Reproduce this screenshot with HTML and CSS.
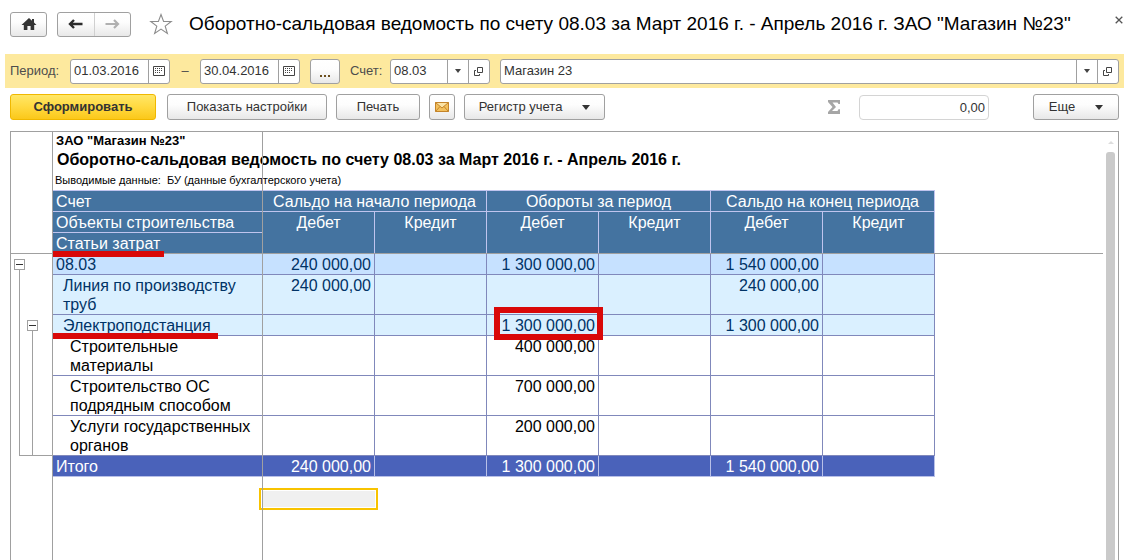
FILE: index.html
```html
<!DOCTYPE html>
<html lang="ru">
<head>
<meta charset="utf-8">
<title>Оборотно-сальдовая ведомость по счету 08.03</title>
<link rel="stylesheet" href="styles.css">
</head>
<body>
<header class="titlebar">
  <button class="btn home" type="button" aria-label="Домой">
    <svg width="16" height="14" viewBox="0 0 16 14"><path fill="#333" d="M8 1 L11 3.700 V2 H13 V5.500 L15.500 8 H13.200 V13 H9.600 V9 H6.400 V13 H2.800 V8 H0.500 Z"/></svg>
  </button>
  <div class="history">
    <button type="button" aria-label="Назад"><svg width="15" height="10" viewBox="0 0 15 10"><path fill="none" stroke="#2b2b2b" stroke-width="2.400" d="M14.500 5H2.500M6 1L2 5l4 4"/></svg></button>
    <button type="button" aria-label="Вперед"><svg width="15" height="10" viewBox="0 0 15 10"><path fill="none" stroke="#b0b0b0" stroke-width="2.200" d="M0.500 5h12M9 1l4 4-4 4"/></svg></button>
  </div>
  <button class="plain star" type="button" aria-label="В избранное">
    <svg width="24" height="22" viewBox="0 0 24 22"><path fill="#fff" stroke="#8c8c8c" stroke-width="1.100" d="M12 1.500l2.600 7h7.600l-6 4.600 2.200 7.400-6.400-4.400-6.400 4.400 2.200-7.400-6-4.600h7.600z"/></svg>
  </button>
  <h1>Оборотно-сальдовая ведомость по счету 08.03 за Март 2016 г. - Апрель 2016 г. ЗАО "Магазин №23"</h1>
  <button class="plain close" type="button" aria-label="Закрыть">
    <svg width="8" height="8" viewBox="0 0 8 8"><path stroke="#555" stroke-width="1.300" d="M0.700 0.700l6.600 6.600M7.300 0.700L0.700 7.300"/></svg>
  </button>
</header>

<form class="filter">
  <label class="period" for="from">Период:</label>
  <div class="field date"><input id="from" type="text" value="01.03.2016">
    <button type="button" aria-label="Выбрать дату начала"><svg width="12" height="10" viewBox="0 0 12 10"><path fill="none" stroke="#444" d="M.5 .5h11v9H.5z"/><path stroke="#444" stroke-dasharray="1 1" d="M2 2.500h8M2 4.500h8M2 6.500h6"/></svg></button></div>
  <span class="dash">–</span>
  <div class="field date"><input type="text" value="30.04.2016" aria-label="Конец периода">
    <button type="button" aria-label="Выбрать дату конца"><svg width="12" height="10" viewBox="0 0 12 10"><path fill="none" stroke="#444" d="M.5 .5h11v9H.5z"/><path stroke="#444" stroke-dasharray="1 1" d="M2 2.500h8M2 4.500h8M2 6.500h6"/></svg></button></div>
  <button class="btn dots" type="button" aria-label="Выбрать период"><svg width="12" height="2" viewBox="0 0 12 2"><path fill="#6b4e1d" d="M1 0h2v2H1zM5 0h2v2H5zM9 0h2v2H9z"/></svg></button>
  <label class="account-label" for="account">Счет:</label>
  <div class="field account"><input id="account" type="text" value="08.03">
    <button type="button" aria-label="Список счетов"><svg width="6" height="4" viewBox="0 0 6 4"><path fill="#444" d="M0 0h6L3 4z"/></svg></button>
    <button type="button" aria-label="Открыть счет"><svg width="10" height="9" viewBox="0 0 10 9"><path fill="none" stroke="#444" d="M3.500 .5h5v5h-5zM2 3.500H.5v5h5V7"/></svg></button></div>
  <div class="field shop"><input type="text" value="Магазин 23" aria-label="Организация">
    <button type="button" aria-label="Список организаций"><svg width="6" height="4" viewBox="0 0 6 4"><path fill="#444" d="M0 0h6L3 4z"/></svg></button>
    <button type="button" aria-label="Открыть организацию"><svg width="10" height="9" viewBox="0 0 10 9"><path fill="none" stroke="#444" d="M3.500 .5h5v5h-5zM2 3.500H.5v5h5V7"/></svg></button></div>
</form>

<div class="toolbar">
  <button class="btn primary" type="button">Сформировать</button>
  <button class="btn settings" type="button">Показать настройки</button>
  <button class="btn print" type="button">Печать</button>
  <button class="btn mail" type="button" aria-label="Отправить по почте">
    <svg width="14" height="10" viewBox="0 0 14 10"><path fill="#f3c05c" stroke="#c4842a" d="M.5 .5h13v9H.5z"/><path fill="#fbe3a5" stroke="#c4842a" d="M.5 .5L7 6l6.500-5.500z"/><path fill="none" stroke="#c4842a" d="M.5 9.500L5 4.500M13.500 9.500L9 4.500"/></svg>
  </button>
  <button class="btn register" type="button">Регистр учета <svg width="8" height="5" viewBox="0 0 8 5"><path fill="#333" d="M0 0h8L4 5z"/></svg></button>
  <label class="sigma" for="sum" aria-label="Сумма"><svg width="12" height="14" viewBox="0 0 12 14"><path fill="#a6a6a6" d="M0 0h12v4h-1.500L9.500 2.500H4.500L8 7l-4 4h5.500l1-1.800H12V14H0v-2L4.500 7 0 2z"/></svg></label>
  <input class="sum" id="sum" type="text" value="0,00">
  <button class="btn more" type="button">Еще <svg width="8" height="5" viewBox="0 0 8 5"><path fill="#333" d="M0 0h8L4 5z"/></svg></button>
</div>

<main class="sheet">
  <div class="gutter">
    <button class="toggle" type="button" aria-label="Свернуть 08.03"></button>
    <div class="branch">
      <button class="toggle" type="button" aria-label="Свернуть Электроподстанция"></button>
      <div class="branch-inner"></div>
    </div>
  </div>
  <div class="doc">
    <p class="org">ЗАО "Магазин №23"</p>
    <h2>Оборотно-сальдовая ведомость по счету 08.03 за Март 2016 г. - Апрель 2016 г.</h2>
    <p class="note">Выводимые данные:&nbsp; БУ (данные бухгалтерского учета)</p>
    <table>
      <colgroup><col class="name"><col span="6"></colgroup>
      <thead>
        <tr><th>Счет</th><th colspan="2">Сальдо на начало периода</th><th colspan="2">Обороты за период</th><th colspan="2">Сальдо на конец периода</th></tr>
        <tr><th>Объекты строительства</th><th rowspan="2">Дебет</th><th rowspan="2">Кредит</th><th rowspan="2">Дебет</th><th rowspan="2">Кредит</th><th rowspan="2">Дебет</th><th rowspan="2">Кредит</th></tr>
        <tr><th>Статьи затрат<span class="underline costs"></span></th></tr>
      </thead>
      <tbody>
        <tr class="level0"><td>08.03</td><td>240 000,00</td><td></td><td>1 300 000,00</td><td></td><td>1 540 000,00</td><td></td></tr>
        <tr class="level1"><td>Линия по производству труб</td><td>240 000,00</td><td></td><td></td><td></td><td>240 000,00</td><td></td></tr>
        <tr class="level1"><td>Электроподстанция<span class="underline object"></span></td><td></td><td></td><td>1 300 000,00<span class="frame"></span></td><td></td><td>1 300 000,00</td><td></td></tr>
        <tr class="level2"><td>Строительные<br>материалы</td><td></td><td></td><td>400 000,00</td><td></td><td></td><td></td></tr>
        <tr class="level2"><td>Строительство ОС подрядным способом</td><td></td><td></td><td>700 000,00</td><td></td><td></td><td></td></tr>
        <tr class="level2"><td>Услуги государственных органов</td><td></td><td></td><td>200 000,00</td><td></td><td></td><td></td></tr>
      </tbody>
      <tfoot>
        <tr><td>Итого</td><td>240 000,00</td><td></td><td>1 300 000,00</td><td></td><td>1 540 000,00</td><td></td></tr>
      </tfoot>
    </table>
    <div class="cursor"></div>
    <div class="freeze-col"></div>
  </div>
  <div class="scroll">
    <svg width="6" height="3" viewBox="0 0 6 3"><path fill="#ddd" d="M0 3h6L3 0z"/></svg>
    <div class="thumb"></div>
  </div>
  <div class="freeze-row"></div>
</main>
</body>
</html>
```

FILE: styles.css
```css
* { box-sizing: border-box; }

body {
  margin: 0;
  min-height: 100vh;
  display: flex;
  flex-direction: column;
  background: #fff;
  color: #333;
  font: 13px/16px "Liberation Sans", Arial, sans-serif;
}

button, input { font: inherit; color: inherit; margin: 0; padding: 0; }
button { display: flex; align-items: center; justify-content: center; flex: none; }
svg { display: block; flex: none; }
h1, h2, p { margin: 0; }

.btn {
  height: 26px;
  border: 1px solid #a0a0a0;
  border-radius: 3px;
  background: linear-gradient(#fff, #fdfdfd 40%, #e8e8e8);
}
.plain { border: 0; background: none; }

.titlebar {
  display: flex;
  align-items: center;
  height: 54px;
  padding: 0 10px 6px;
}
.home { width: 37px; height: 25px; }
.history {
  display: flex;
  width: 74px;
  height: 25px;
  margin-left: 10px;
  border: 1px solid #a0a0a0;
  border-radius: 3px;
  background: linear-gradient(#fff, #fdfdfd 40%, #e8e8e8);
}
.history button { flex: 1; border: 0; background: none; }
.history button + button { border-left: 1px solid #d0d0d0; }
.star { margin-left: 18px; }
h1 {
  flex: 1;
  margin-left: 16px;
  color: #000;
  font-size: 19px;
  font-weight: 400;
  line-height: 24px;
  white-space: nowrap;
}
.close { padding-bottom: 8px; }

.filter {
  display: flex;
  align-items: center;
  height: 34px;
  margin: 0 9px 0 5px;
  padding: 0 5px;
  background: #fde99e;
  color: #4d4d4d;
}
.period { width: 60px; }
.field {
  display: flex;
  height: 25px;
  border: 1px solid #a0a0a0;
  border-radius: 3px;
  background: #fff;
  color: #333;
}
.field input {
  flex: 1;
  min-width: 0;
  padding-left: 3px;
  border: 0;
  background: none;
}
.field button {
  width: 21px;
  border: 0;
  border-left: 1px solid #a0a0a0;
  background: none;
}
.date { width: 100px; }
.dash { width: 30px; text-align: center; }
.dots { width: 30px; height: 25px; margin-left: 10px; padding-top: 10px; }
.account-label { width: 40px; margin-left: 10px; }
.account { width: 100px; }
.shop { flex: 1; margin-left: 10px; }

.toolbar {
  display: flex;
  align-items: center;
  padding: 6px 14px 11px 10px;
}
.primary {
  width: 146px;
  border-color: #f0b800;
  background: linear-gradient(#ffe767, #ffd940 50%, #fbc81a);
  font-weight: 700;
}
.settings { width: 160px; margin-left: 11px; }
.print { width: 84px; margin-left: 9px; }
.mail { width: 26px; margin-left: 9px; }
.register { width: 141px; margin-left: 9px; gap: 20px; }
.sigma { margin-left: auto; }
.sum {
  width: 130px;
  height: 25px;
  margin-left: 19px;
  padding-right: 3px;
  border: 1px solid #d4d4d4;
  border-radius: 4px;
  text-align: right;
}
.more { width: 86px; margin-left: 44px; gap: 20px; }

.sheet {
  position: relative;
  flex: 1;
  display: flex;
  margin: 0 14px 0 10px;
  border: 1px solid #a0a0a0;
  border-bottom: 0;
  color: #000;
}
.gutter { width: 41px; padding-top: 127px; }
.toggle {
  width: 11px;
  height: 11px;
  margin-left: 3px;
  border: 1px solid #a0a0a0;
  background: linear-gradient(#333, #333) center / 7px 1px no-repeat #fff;
}
.branch {
  height: 186px;
  margin-left: 8px;
  padding-top: 50px;
  border: solid #a0a0a0;
  border-width: 0 0 1px 1px;
}
.branch .toggle { margin-left: 7px; }
.branch-inner {
  height: 124px;
  margin-left: 12px;
  border-left: 1px solid #a0a0a0;
}

.doc {
  position: relative;
  flex: 1;
  border-left: 1px solid #a0a0a0;
}
.org { padding-left: 3px; font-weight: 700; line-height: 18px; }
h2 { padding-left: 4px; font-size: 16px; line-height: 20px; }
.note { padding-left: 2px; font-size: 11px; line-height: 20px; }

table {
  width: 882px;
  table-layout: fixed;
  border-collapse: separate;
  border-spacing: 0;
  border-top: 1px solid #c0c4ee;
  font-size: 16px;
  line-height: 19px;
}
.name { width: 210px; }
th, td {
  position: relative;
  padding: 1px 3px 0;
  border: solid #8088bb;
  border-width: 0 1px 1px 0;
  font-weight: 400;
  text-align: right;
  vertical-align: top;
}
th {
  border-color: #c0c4ee;
  background: #4473a0;
  color: #fff;
  text-align: center;
}
th:first-child:not([rowspan]), td:first-child { text-align: left; }
.level0 td { background: #c6e1ff; color: #003366; }
.level1 td { background: #daf0ff; color: #003366; }
.level1 td:first-child { padding-left: 10px; }
.level2 td:first-child { padding-left: 17px; }
tfoot td { background: #4a62ba; border-color: #b8c0e8; color: #fff; }

.underline, .frame { position: absolute; background: #d90808; z-index: 2; }
.underline { height: 6px; }
.costs { left: 0; top: 18px; width: 111px; }
.object { left: 0; top: 18px; width: 165px; }
.frame {
  inset: -8px -5px -5px 7px;
  border: 6px solid #d90808;
  background: none;
}

.cursor {
  width: 119px;
  height: 22px;
  margin: 11px 0 0 206px;
  padding: 1px;
  border: 2px solid #f8c300;
  background: #f0f0f0 content-box;
}
.freeze-col {
  position: absolute;
  top: 0;
  bottom: 0;
  left: 209px;
  width: 1px;
  background: #a0a0a0;
}
.freeze-row {
  position: absolute;
  top: 121px;
  left: 0;
  right: 15px;
  height: 1px;
  background: #a0a0a0;
}
.scroll {
  display: flex;
  flex-direction: column;
  align-items: center;
  width: 15px;
  padding-top: 9px;
  gap: 8px;
}
.thumb {
  flex: 1;
  width: 9px;
  border-radius: 3px 3px 0 0;
  background: #cacaca;
}
```
